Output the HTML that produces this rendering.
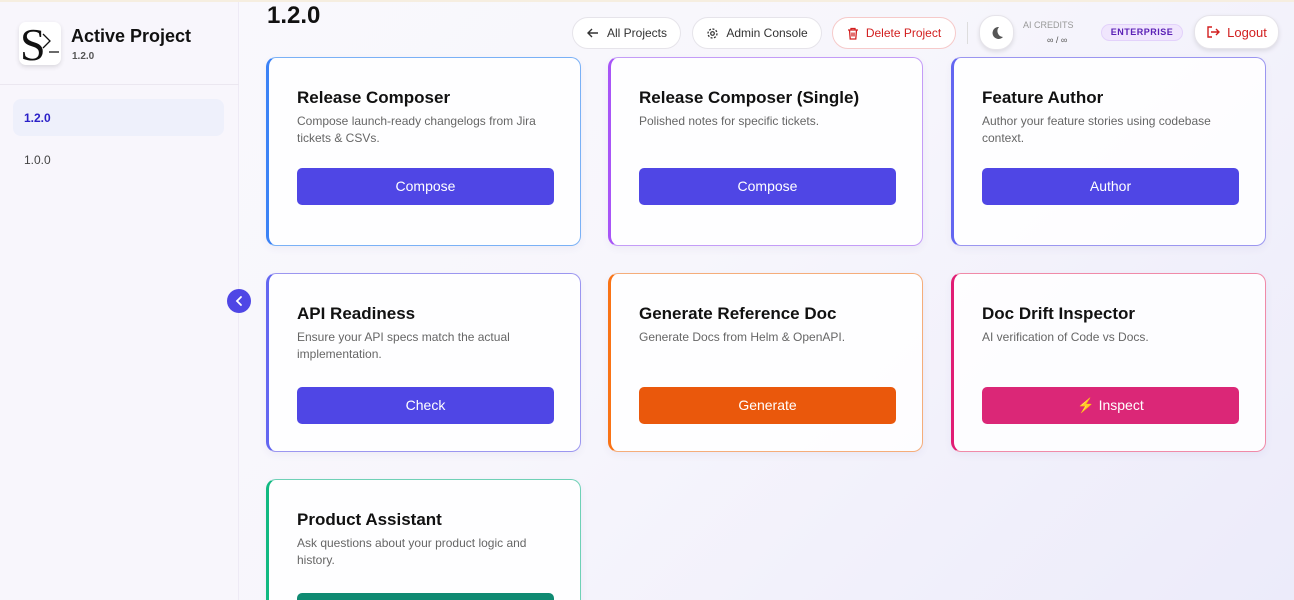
<!DOCTYPE html>
<html><head><meta charset="utf-8"><style>
*{box-sizing:border-box;margin:0;padding:0}
html{width:1294px;height:600px;overflow:hidden}
body{width:1294px;height:600px;overflow:hidden;font-family:"Liberation Sans",sans-serif;background:linear-gradient(135deg,#faf9fd 0%,#f7f6fc 50%,#ecebfa 100%);position:relative}
.topline{position:absolute;top:0;left:0;width:1294px;height:2px;background:#f6eee0}
.side{position:absolute;left:0;top:2px;width:239px;height:598px;background:#f8f6fc;border-right:1px solid #eeeaf5}
.logo{position:absolute;left:19px;top:20px;width:42px;height:43px;background:#fff;border-radius:7px;box-shadow:0 2px 5px rgba(0,0,0,.12);overflow:hidden}
.t1{position:absolute;left:71px;top:24px;font-size:18px;font-weight:bold;color:#111}
.t2{position:absolute;left:72px;top:49px;font-size:10px;font-weight:bold;color:#555}
.hr{position:absolute;left:0;top:82px;width:239px;height:1px;background:#ebe7f0}
.nav1{position:absolute;left:13px;top:97px;width:211px;height:37px;background:#eef0fb;border-radius:8px;color:#2a20c8;font-size:12px;font-weight:bold;padding:12px 0 0 11px}
.nav2{position:absolute;left:24px;top:151px;font-size:12px;color:#444}
.collapse{position:absolute;left:227px;top:289px;width:24px;height:24px;border-radius:50%;background:#4f46e5}
h1{position:absolute;left:267px;top:2px;font-size:24px;color:#111}
.btn{position:absolute;top:17px;height:32px;border-radius:16px;background:#fff;border:1px solid #e6e4ea;font-size:12px;color:#333;display:flex;align-items:center;justify-content:center;gap:7px}
.card{position:absolute;width:315px;background:rgba(255,255,255,.85);border-radius:10px;border:1px solid;border-left-width:3px;box-shadow:0 3px 8px rgba(80,70,160,.06);overflow:hidden}
.card h3{position:absolute;left:28px;top:30px;font-size:17px;color:#111}
.card p{position:absolute;left:28px;top:55px;width:250px;font-size:12px;line-height:17px;color:#666}
.card .b{position:absolute;left:28px;width:257px;height:37px;border-radius:5px;color:#fff;font-size:14px;text-align:center;line-height:37px}
svg{display:block}
</style></head><body>
<div class="topline"></div>
<div class="side">
<div class="logo"><svg width="42" height="43" viewBox="0 0 42 43"><text x="1" y="38" font-family="Liberation Serif" font-size="46" fill="#111">S</text><path d="M24 12l7 7-7 7" stroke="#111" stroke-width="1.3" fill="none"/><path d="M30 30h10" stroke="#111" stroke-width="1.3"/></svg></div>
<div class="t1">Active Project</div><div class="t2">1.2.0</div>
<div class="hr"></div>
<div class="nav1">1.2.0</div><div class="nav2">1.0.0</div>
</div>
<div class="collapse"><svg width="24" height="24"><path d="M14 8l-4 4 4 4" stroke="#fff" stroke-width="1.8" fill="none" stroke-linecap="round"/></svg></div>
<h1>1.2.0</h1>
<div class="btn" style="left:572px;width:109px"><svg width="14" height="14"><path d="M12 7H2M6 3L2 7l4 4" stroke="#333" stroke-width="1.4" fill="none"/></svg>All Projects</div>
<div class="btn" style="left:692px;width:130px"><svg width="13" height="13"><circle cx="6.5" cy="6.5" r="4.5" stroke="#333" stroke-width="1.3" fill="none" stroke-dasharray="2 1.5"/><circle cx="6.5" cy="6.5" r="1.8" stroke="#333" stroke-width="1.2" fill="none"/></svg>Admin Console</div>
<div class="btn" style="left:832px;width:124px;border-color:#f6caca;color:#d21f1f"><svg width="12" height="13"><path d="M1 3h10M4 3V1.5h4V3M2.5 3l.7 9h5.6l.7-9M5 5.5v4M7 5.5v4" stroke="#d21f1f" stroke-width="1.3" fill="none"/></svg>Delete Project</div>
<div style="position:absolute;left:967px;top:22px;width:1px;height:22px;background:#ddd"></div>
<div class="btn" style="left:979px;width:35px;height:35px;top:15px;box-shadow:0 2px 4px rgba(0,0,0,.1)"><svg width="16" height="16"><path d="M10 2a6 6 0 1 0 4 10A6 6 0 0 1 10 2z" fill="#555"/></svg></div>
<div style="position:absolute;left:1023px;top:20px;font-size:9px;color:#999">AI CREDITS</div>
<div style="position:absolute;left:1047px;top:35px;font-size:9px;color:#555">∞ / ∞</div>
<div style="position:absolute;left:1101px;top:24px;width:82px;height:17px;border-radius:9px;background:#f0e6fd;border:1px solid #e3d2fb;color:#5b21b6;font-size:9px;font-weight:bold;text-align:center;line-height:15px;letter-spacing:.5px">ENTERPRISE</div>
<div class="btn" style="left:1194px;width:85px;height:34px;top:15px;color:#d21f1f;box-shadow:0 2px 5px rgba(0,0,0,.1);font-size:13px"><svg width="14" height="14"><path d="M6 2H2v10h4M5 7h8M10 4l3 3-3 3" stroke="#d21f1f" stroke-width="1.4" fill="none"/></svg>Logout</div>

<div class="card" style="left:266px;top:57px;height:189px;border-color:#7ab1f6;border-left-color:#3b82f6"><h3>Release Composer</h3><p>Compose launch-ready changelogs from Jira tickets &amp; CSVs.</p><div class="b" style="top:110px;background:#4f46e5">Compose</div></div>
<div class="card" style="left:608px;top:57px;height:189px;border-color:#c49cf7;border-left-color:#a855f7"><h3>Release Composer (Single)</h3><p>Polished notes for specific tickets.</p><div class="b" style="top:110px;background:#4f46e5">Compose</div></div>
<div class="card" style="left:951px;top:57px;height:189px;border-color:#9b96f0;border-left-color:#6366f1"><h3>Feature Author</h3><p>Author your feature stories using codebase context.</p><div class="b" style="top:110px;background:#4f46e5">Author</div></div>
<div class="card" style="left:266px;top:273px;height:179px;border-color:#9b96f0;border-left-color:#6366f1"><h3>API Readiness</h3><p>Ensure your API specs match the actual implementation.</p><div class="b" style="top:113px;background:#4f46e5">Check</div></div>
<div class="card" style="left:608px;top:273px;height:179px;border-color:#f5ad7a;border-left-color:#f97316"><h3>Generate Reference Doc</h3><p>Generate Docs from Helm &amp; OpenAPI.</p><div class="b" style="top:113px;background:#ea580c">Generate</div></div>
<div class="card" style="left:951px;top:273px;height:179px;border-color:#f08aa8;border-left-color:#e11d74"><h3>Doc Drift Inspector</h3><p>AI verification of Code vs Docs.</p><div class="b" style="top:113px;background:#db2777"><span style="color:#fbbf24">⚡</span> Inspect</div></div>
<div class="card" style="left:266px;top:479px;height:140px;border-color:#6fd1b6;border-left-color:#10b981"><h3>Product Assistant</h3><p>Ask questions about your product logic and history.</p><div class="b" style="top:113px;background:#0f8a72"></div></div>
</body></html>
